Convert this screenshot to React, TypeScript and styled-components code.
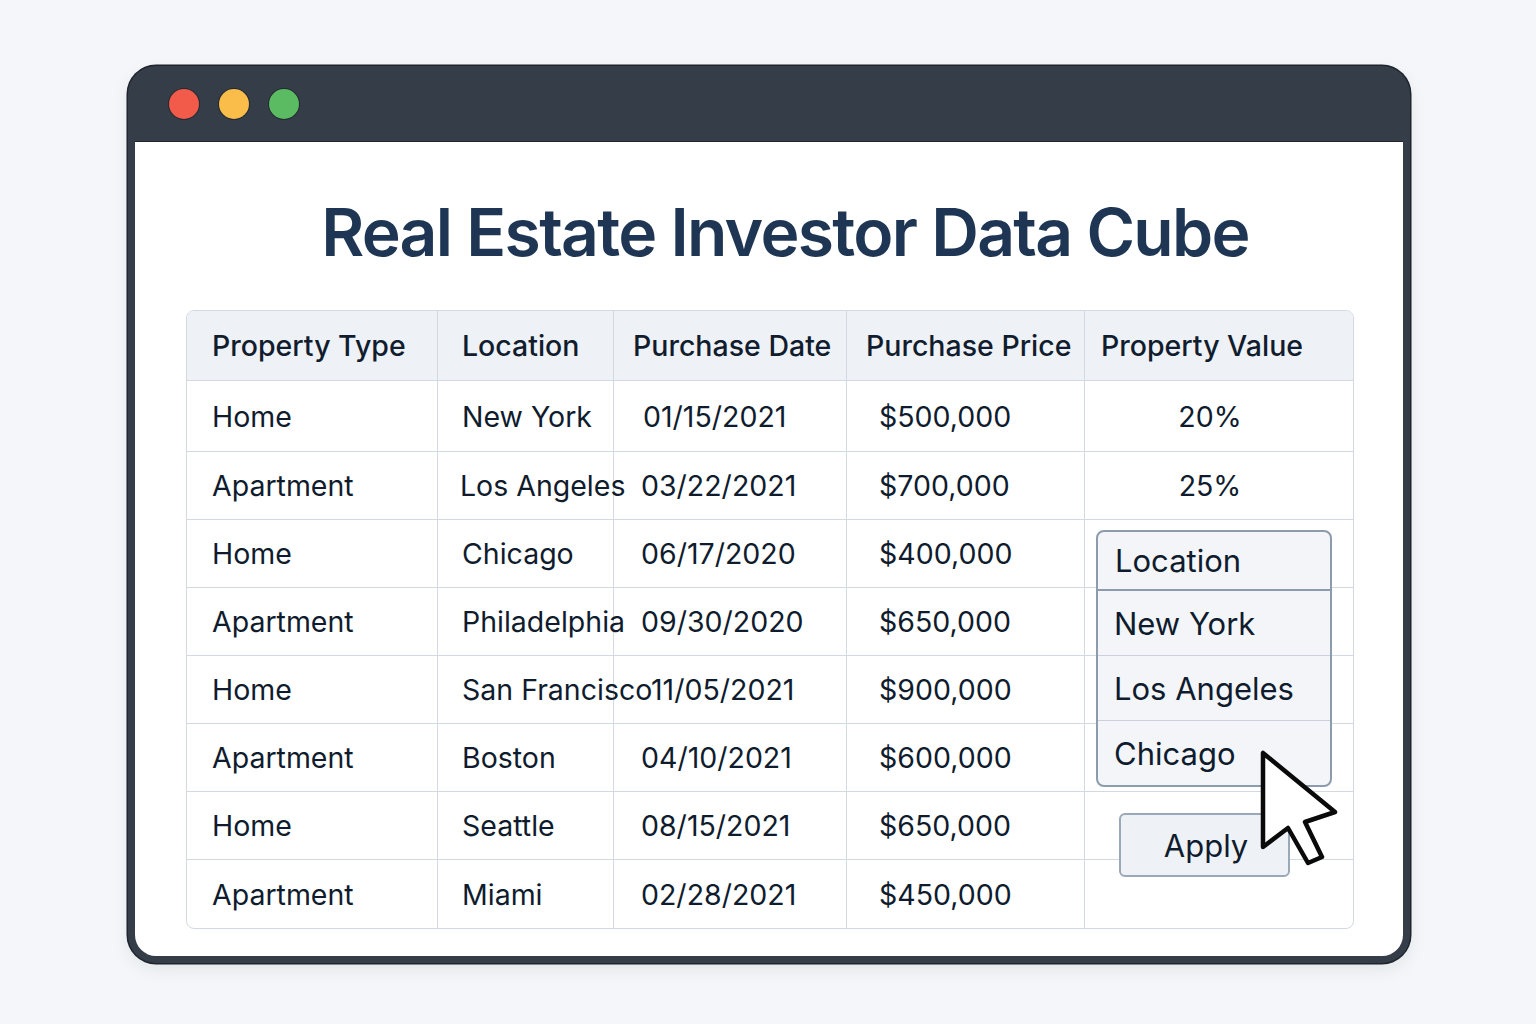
import styled, {createGlobalStyle} from 'styled-components';

const GlobalStyle = createGlobalStyle`
  html, body {
    margin: 0;
    padding: 0;
    background: #f4f6f9;
  }
  body {
    font-family: Inter, 'Liberation Sans', sans-serif;
    color: #0f1c2e;
  }
`;

type Row = {
  type: string;
  location: string;
  date: string;
  price: string;
  value?: string;
};

const rows: Row[] = [
  {type: 'Home', location: 'New York', date: '01/15/2021', price: '$500,000', value: '20%'},
  {type: 'Apartment', location: 'Los Angeles', date: '03/22/2021', price: '$700,000', value: '25%'},
  {type: 'Home', location: 'Chicago', date: '06/17/2020', price: '$400,000'},
  {type: 'Apartment', location: 'Philadelphia', date: '09/30/2020', price: '$650,000'},
  {type: 'Home', location: 'San Francisco', date: '11/05/2021', price: '$900,000'},
  {type: 'Apartment', location: 'Boston', date: '04/10/2021', price: '$600,000'},
  {type: 'Home', location: 'Seattle', date: '08/15/2021', price: '$650,000'},
  {type: 'Apartment', location: 'Miami', date: '02/28/2021', price: '$450,000'},
];

const options = ['New York', 'Los Angeles', 'Chicago'];

const App = () => {
  return (
    <Page>
      <GlobalStyle />
      <Window>
        <TitleBar>
          <Light color="#f25a4a" />
          <Light color="#fbbd4a" />
          <Light color="#5bbb62" />
        </TitleBar>
        <Content>
          <Title>Real Estate Investor Data Cube</Title>
          <TableWrap>
            <Table>
              <colgroup>
                <col style={{width: '251px'}} />
                <col style={{width: '176px'}} />
                <col style={{width: '233px'}} />
                <col style={{width: '238px'}} />
                <col style={{width: '268px'}} />
              </colgroup>
              <thead>
                <tr>
                  <Th pad={25}>Property Type</Th>
                  <Th pad={24}>Location</Th>
                  <Th pad={19}>Purchase Date</Th>
                  <Th pad={19}>Purchase Price</Th>
                  <Th pad={16}>Property Value</Th>
                </tr>
              </thead>
              <tbody>
                {rows.map((r, i) => (
                  <BodyRow key={i} first={i === 0}>
                    <Td pad={25}>{r.type}</Td>
                    <Td pad={i === 1 ? 22 : 24}>{r.location}</Td>
                    <Td pad={i === 0 ? 29 : i === 4 ? 37 : 27}>{r.date}</Td>
                    <Td pad={32}>{r.price}</Td>
                    <ValueTd>{r.value}</ValueTd>
                  </BodyRow>
                ))}
              </tbody>
            </Table>
            <Dropdown>
              <DropHead>Location</DropHead>
              {options.map(o => (
                <DropItem key={o}>{o}</DropItem>
              ))}
            </Dropdown>
            <ApplyButton>Apply</ApplyButton>
            <Cursor viewBox="0 0 90 130" width="90" height="130">
              <path
                d="M8 8 L8 102 L33 83 L53 118 L67 112 L50 77 L80 67 Z"
                fill="#ffffff"
                stroke="#0a0a0a"
                strokeWidth="4.5"
                strokeLinejoin="round"
              />
            </Cursor>
          </TableWrap>
        </Content>
      </Window>
    </Page>
  );
};

const Page = styled.div`
  min-height: 1024px;
  padding: 66px 0 0 128px;
  box-sizing: border-box;
`;

const Window = styled.div`
  width: 1282px;
  height: 897px;
  box-sizing: border-box;
  background: #353e48;
  border-radius: 28px;
  padding: 0 7px 7px;
  display: flex;
  flex-direction: column;
  box-shadow: 0 0 0 1.5px #1e252d, 0 6px 18px rgba(30, 40, 55, 0.08);
`;

const TitleBar = styled.div`
  height: 76px;
  flex-shrink: 0;
  display: flex;
  align-items: center;
  gap: 20px;
  padding: 0 0 0 34px;
  box-sizing: border-box;
  border-bottom: 1.5px solid #1e252d;
`;

const Light = styled.span<{color: string}>`
  width: 30px;
  height: 30px;
  border-radius: 50%;
  background: ${p => p.color};
  box-shadow: 0 0 0 1px rgba(20, 25, 35, 0.55);
`;

const Content = styled.div`
  flex: 1;
  background: #ffffff;
  border-radius: 0 0 21px 21px;
  padding: 0 51px;
  display: flex;
  flex-direction: column;
  align-items: center;
`;

const Title = styled.h1`
  margin: 50px 0 0 32px;
  height: 118px;
  font-size: 66px;
  line-height: 80px;
  font-weight: 600;
  letter-spacing: -1.7px;
  color: #1e3553;
  text-align: center;
  white-space: nowrap;
`;

const TableWrap = styled.div`
  position: relative;
  width: 1166px;
`;

const Table = styled.table`
  width: 1166px;
  table-layout: fixed;
  border-collapse: separate;
  border-spacing: 0;
  border: 1.5px solid #d3d9e2;
  border-radius: 8px;
  overflow: hidden;
  box-sizing: border-box;
  tr > *:not(:last-child) {
    border-right: 1.5px solid #d3d9e2;
  }
  tbody tr:not(:last-child) > td {
    border-bottom: 1.5px solid #d3d9e2;
  }
`;

const BodyRow = styled.tr<{first: boolean}>`
  height: ${p => (p.first ? 71 : 68)}px;
`;

const Th = styled.th<{pad: number}>`
  height: 69px;
  padding: 0 0 0 ${p => p.pad}px;
  text-align: left;
  font-size: 28.5px;
  font-weight: 500;
  color: #111d2e;
  background: #eef1f5;
  border-bottom: 1.5px solid #d3d9e2;
  white-space: nowrap;
`;

const Td = styled.td<{pad: number}>`
  padding: 0 0 0 ${p => p.pad}px;
  font-size: 28.5px;
  font-weight: 400;
  color: #0f1c2e;
  white-space: nowrap;
  overflow: visible;
`;

const ValueTd = styled.td`
  padding: 0 18px 0 0;
  text-align: center;
  font-size: 28.5px;
  color: #0f1c2e;
`;

const Dropdown = styled.div`
  position: absolute;
  left: 910px;
  top: 220px;
  width: 236px;
  box-sizing: border-box;
  background: #f3f5f8;
  border: 2px solid #8d9cad;
  border-radius: 8px;
  overflow: hidden;
  display: flex;
  flex-direction: column;
`;

const DropHead = styled.div`
  height: 57px;
  padding: 0 0 0 17px;
  display: flex;
  align-items: center;
  font-size: 31px;
  color: #0f1c2e;
  border-bottom: 2px solid #8d9cad;
`;

const DropItem = styled.div`
  height: 64px;
  padding: 0 0 0 16px;
  display: flex;
  align-items: center;
  font-size: 31px;
  color: #0f1c2e;
  &:not(:last-child) {
    border-bottom: 1.5px solid #c9d1db;
  }
`;

const ApplyButton = styled.button`
  position: absolute;
  left: 933px;
  top: 503px;
  width: 171px;
  height: 64px;
  box-sizing: border-box;
  background: #eef1f5;
  border: 2px solid #9aa8b7;
  border-radius: 6px;
  font-family: Inter, 'Liberation Sans', sans-serif;
  font-size: 31px;
  color: #0f1c2e;
  padding: 0 0 0 3px;
`;

const Cursor = styled.svg`
  position: absolute;
  left: 1069px;
  top: 435px;
`;

export default App;
